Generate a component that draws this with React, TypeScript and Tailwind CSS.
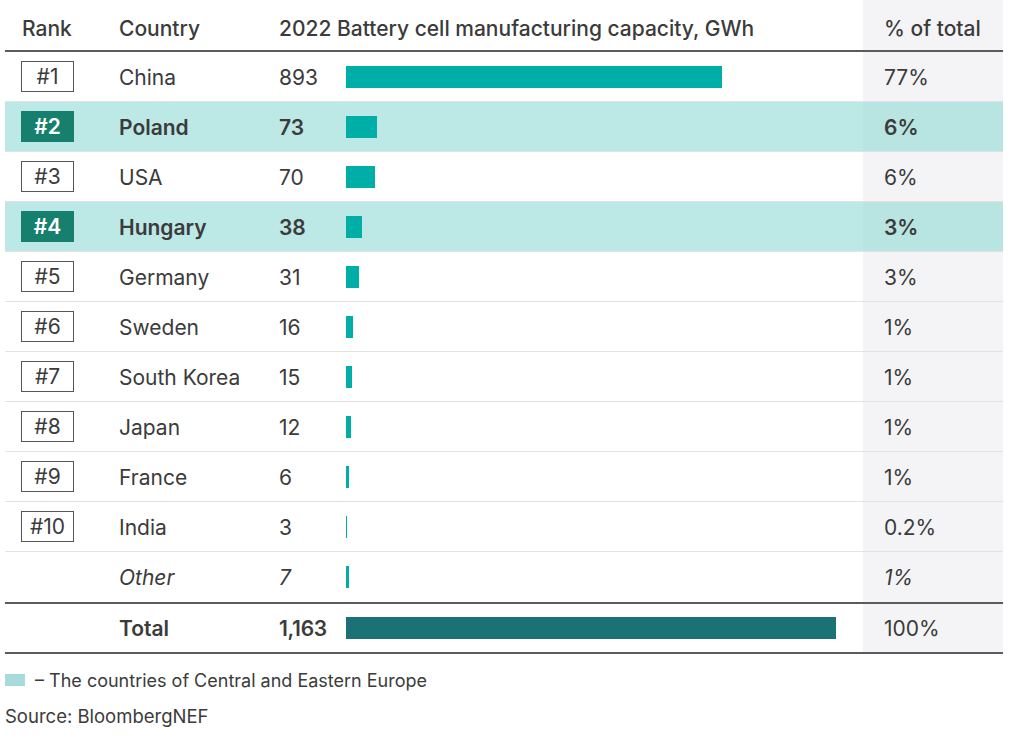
import React from "react";

type Row = { rank?: number; country: string; value: number; pct: string; cee?: boolean; italic?: boolean };

const rows: Row[] = [
  { rank: 1, country: "China", value: 893, pct: "77%" },
  { rank: 2, country: "Poland", value: 73, pct: "6%", cee: true },
  { rank: 3, country: "USA", value: 70, pct: "6%" },
  { rank: 4, country: "Hungary", value: 38, pct: "3%", cee: true },
  { rank: 5, country: "Germany", value: 31, pct: "3%" },
  { rank: 6, country: "Sweden", value: 16, pct: "1%" },
  { rank: 7, country: "South Korea", value: 15, pct: "1%" },
  { rank: 8, country: "Japan", value: 12, pct: "1%" },
  { rank: 9, country: "France", value: 6, pct: "1%" },
  { rank: 10, country: "India", value: 3, pct: "0.2%" },
  { country: "Other", value: 7, pct: "1%", italic: true },
];

const TOTAL = 1163;
const BAR_MAX = 490;
const barW = (v: number) => Math.max(1, (v / TOTAL) * BAR_MAX);

const grid = "grid grid-cols-[114px_160px_67px_517px_140px]";

export default function App() {
  return (
    <div
      className="w-[1024px] h-[739px] bg-white text-[#3b3b3b] px-[5px] overflow-hidden"
      style={{ fontFamily: "Inter, 'Liberation Sans', sans-serif" }}
    >
      <div className="w-[998px]">
        {/* header */}
        <div className={`${grid} h-[52px] border-b-2 border-[#5c5c5c] text-[21px] font-medium`}>
          <div className="flex items-center pt-[8px] pl-[17px]">Rank</div>
          <div className="flex items-center pt-[8px]">Country</div>
          <div className="col-span-2 flex items-center pt-[8px]">2022 Battery cell manufacturing capacity, GWh</div>
          <div className="flex items-center pt-[8px] pl-[21px] bg-[#f4f4f6]">% of total</div>
        </div>
        {rows.map((r, i) => {
          const last = i === rows.length - 1;
          return (
            <div
              key={r.country}
              className={`${grid} h-[50px] text-[21px] ${last ? "" : "border-b border-[#e2e2e2]"} ${
                r.cee ? "bg-[#bce8e6] font-semibold" : ""
              } ${r.italic ? "italic" : ""}`}
            >
              <div className="flex items-center pl-[16px]">
                {r.rank !== undefined &&
                  (r.cee ? (
                    <div className="w-[53px] h-[31px] bg-[#167f6d] text-white flex items-center justify-center">#{r.rank}</div>
                  ) : (
                    <div className="w-[53px] h-[31px] border border-[#555] flex items-center justify-center font-normal">#{r.rank}</div>
                  ))}
              </div>
              <div className="flex items-center pt-[2px]">{r.country}</div>
              <div className="flex items-center pt-[2px]">{r.value}</div>
              <div className="flex items-center">
                <div className="h-[22px] bg-[#00aea8]" style={{ width: barW(r.value) }} />
              </div>
              <div className={`flex items-center pt-[2px] pl-[21px] ${r.cee ? "bg-[#b8e4e2]" : "bg-[#f4f4f6]"}`}>{r.pct}</div>
            </div>
          );
        })}
        {/* total */}
        <div className={`${grid} h-[52px] border-y-2 border-[#5c5c5c] text-[21px]`}>
          <div />
          <div className="flex items-center pt-[2px] font-semibold">Total</div>
          <div className="flex items-center pt-[2px] font-semibold tracking-[-0.3px]">1,163</div>
          <div className="flex items-center">
            <div className="h-[22px] bg-[#1a7276]" style={{ width: BAR_MAX }} />
          </div>
          <div className="flex items-center pt-[2px] pl-[21px] bg-[#f4f4f6]">100%</div>
        </div>
        {/* legend */}
        <div className="flex items-center h-[24px] mt-[14px] text-[18px]">
          <div className="w-[20px] h-[12px] bg-[#a8dcdb] mr-[10px]" />
          <span>– The countries of Central and Eastern Europe</span>
        </div>
        <div className="mt-[12px] text-[18.5px] leading-[24px]">Source: BloombergNEF</div>
      </div>
    </div>
  );
}
